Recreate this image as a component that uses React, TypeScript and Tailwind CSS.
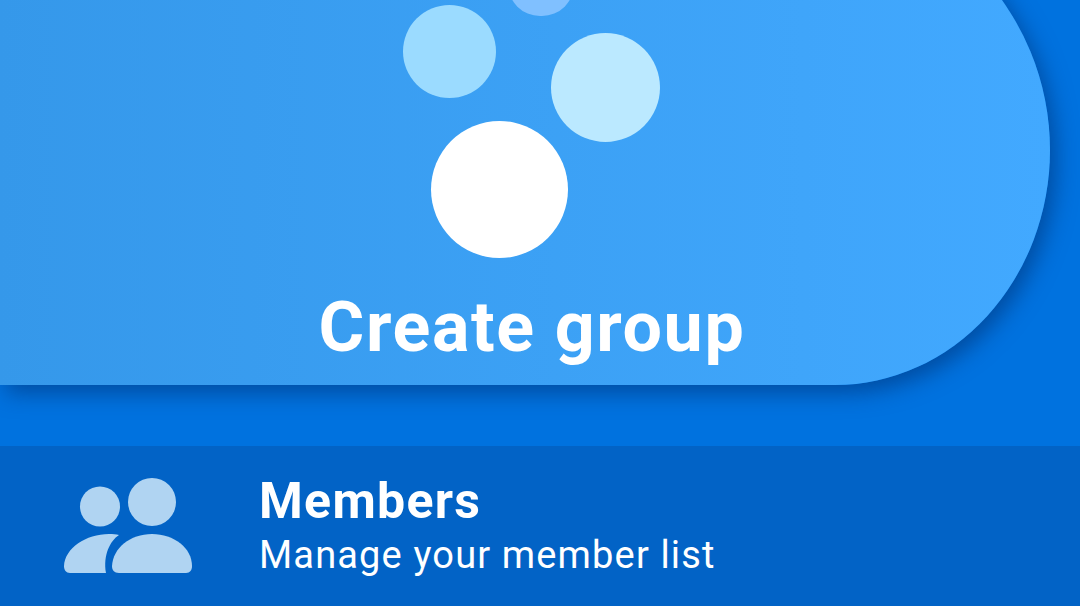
export default function App() {
  return (
    <div className="h-[606px] w-[1080px] overflow-hidden bg-[#0072df] font-['Roboto',sans-serif] text-white">
      <div className="relative -mt-[108px] flex h-[493px] w-[1050px] flex-col items-center justify-end rounded-tr-[258px] rounded-br-[215px_235px] bg-gradient-to-r from-[#3598ea] to-[#42a9ff] pb-[18px] pl-[14px] shadow-[6px_8px_22px_rgba(0,45,110,0.55)]">
        <div className="absolute left-[508px] top-[60px] h-[64px] w-[66px] rounded-full bg-[#80c0ff]" />
        <div className="absolute left-[403px] top-[113px] h-[93px] w-[93px] rounded-full bg-[#9bdbff]" />
        <div className="absolute left-[551px] top-[141px] h-[109px] w-[109px] rounded-full bg-[#bbe9ff]" />
        <div className="absolute left-[431px] top-[229px] h-[137px] w-[137px] rounded-full bg-white" />
        <div className="text-[70px] font-bold leading-[80px] tracking-[1.6px]">Create group</div>
      </div>
      <div className="mt-[61px] flex h-[160px] items-start bg-[#0263c6] pl-[64px] pt-[28px]">
        <svg width="128" height="95" viewBox="0 0 128 95" className="mt-[4px] shrink-0" fill="#b0d4f2">
          <circle cx="88" cy="24" r="24" />
          <circle cx="36" cy="28.5" r="20" />
          <path d="M55 95C50 95 48 92 48 88C49 70 66 56 88 56C110 56 128 70 128 88C128 92 126 95 122 95Z" />
          <path d="M6 95C2 95 0 92 0 88C1 70 22 56 45 56C49 56 52 56 55 57C46 63 39 77 42 95Z" />
        </svg>
        <div className="ml-[67px] flex flex-col">
          <div className="text-[50px] font-bold leading-[54px] tracking-[1.3px]">Members</div>
          <div className="mt-[1px] text-[38px] leading-[52px] tracking-[1.15px]">Manage your member list</div>
        </div>
      </div>
    </div>
  );
}
